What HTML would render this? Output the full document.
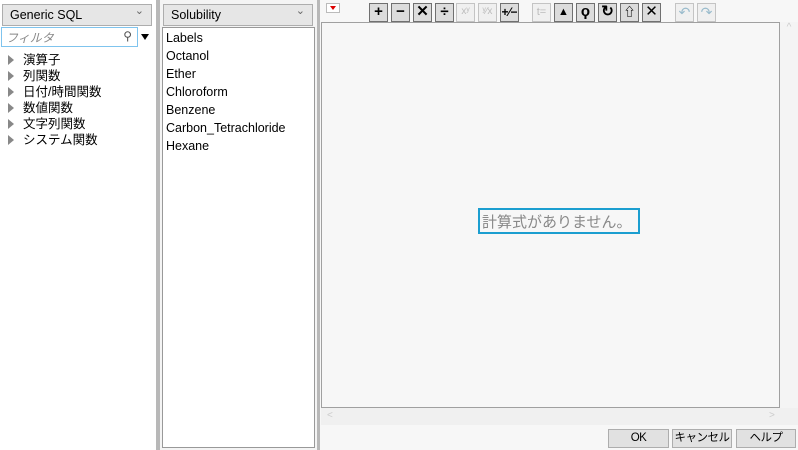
<!DOCTYPE html><html><head><meta charset="utf-8"><style>
html,body{margin:0;width:798px;height:450px;overflow:hidden}
body{background:#f7f7f7;font-family:"Liberation Sans","Noto Sans CJK JP",sans-serif;position:relative;font-size:12px;color:#000}
div{position:absolute;box-sizing:border-box}
.dd{background:#e6e6e6;border:1px solid #adadad;height:22px;padding:3px 7px;font-size:12.5px}
.dd:after{content:"⌄";position:absolute;right:7px;top:-1px;color:#666;font-size:11px}
.tb{top:3px;width:19px;height:19px;border:1px solid #707070;background:#dcdcdc;text-align:center;font-weight:bold;font-size:15px;line-height:16px}
.tb.f{border-color:#c4c4c4;background:#f0f0f0;color:#bbb;font-size:10px;font-weight:normal}
.tr{left:8px;font-size:12.5px;height:16px}
.tr:before{content:"";position:absolute;left:0;top:4px;border-left:6px solid #888;border-top:5px solid transparent;border-bottom:5px solid transparent}
.tr span{position:absolute;left:15px;top:-2px;white-space:nowrap}
.btn{top:429px;height:19px;border:1px solid #adadad;background:#e1e1e1;text-align:center;font-size:11.5px;line-height:17px;white-space:nowrap;overflow:hidden;letter-spacing:-0.5px}
</style></head><body>
<div style="left:0;top:0;width:156px;height:450px;background:#fff"></div>
<div style="left:156px;top:0;width:4px;height:450px;background:#b8b8b8"></div>
<div style="left:160px;top:0;width:157px;height:450px;background:#f4f4f4"></div>
<div style="left:317px;top:0;width:3px;height:450px;background:#b8b8b8"></div>
<div class="dd" style="left:2px;top:4px;width:150px">Generic SQL</div>
<div style="left:1px;top:27px;width:137px;height:20px;border:1px solid #7fc4ee;background:#fff;color:#888;font-style:italic;padding:1px 4px;font-size:12px">フィルタ<span style="position:absolute;right:5px;top:1px;font-style:normal;color:#555">⚲</span></div>
<div style="left:141px;top:34px;border-top:6px solid #000;border-left:4px solid transparent;border-right:4px solid transparent"></div>
<div class="tr" style="top:51px"><span>演算子</span></div>
<div class="tr" style="top:67px"><span>列関数</span></div>
<div class="tr" style="top:83px"><span>日付/時間関数</span></div>
<div class="tr" style="top:99px"><span>数値関数</span></div>
<div class="tr" style="top:115px"><span>文字列関数</span></div>
<div class="tr" style="top:131px"><span>システム関数</span></div>
<div class="dd" style="left:163px;top:4px;width:150px">Solubility</div>
<div style="left:162px;top:27px;width:153px;height:421px;border:1px solid #999;background:#fff;padding:1px 3px;font-size:12.5px;line-height:18px">Labels<br>Octanol<br>Ether<br>Chloroform<br>Benzene<br>Carbon_Tetrachloride<br>Hexane</div>
<div style="left:326px;top:3px;width:14px;height:10px;border:1px solid #bbb;background:#fff"><div style="left:3px;top:2px;border-top:4px solid #d00;border-left:3px solid transparent;border-right:3px solid transparent"></div></div>
<div class="tb" style="left:369px">+</div>
<div class="tb" style="left:391px">−</div>
<div class="tb" style="left:413px">✕</div>
<div class="tb" style="left:435px">÷</div>
<div class="tb f" style="left:456px">xʸ</div>
<div class="tb f" style="left:478px">ʸ⁄x</div>
<div class="tb" style="left:500px;font-size:12px">+⁄−</div>
<div class="tb f" style="left:532px;font-size:11px">t=</div>
<div class="tb" style="left:554px;font-size:11px">▲</div>
<div class="tb" style="left:576px">ϙ</div>
<div class="tb" style="left:598px">↻</div>
<div class="tb" style="left:620px;font-size:12px">⇧</div>
<div class="tb" style="left:642px;font-weight:normal">✕</div>
<div class="tb f" style="left:675px;color:#9bc;font-size:14px">↶</div>
<div class="tb f" style="left:697px;color:#9bc;font-size:14px">↷</div>
<div style="left:321px;top:22px;width:459px;height:386px;border:1px solid #a0a0a0;background:#f7f7f7"></div>
<div style="left:780px;top:22px;width:18px;height:386px;background:#f4f4f4;color:#ccc;font-size:10px;text-align:center">^</div>
<div style="left:321px;top:408px;width:477px;height:17px;background:#f0f0f0;color:#ccc;font-size:10px;padding:2px 6px">&lt;<span style="position:absolute;left:448px">&gt;</span></div>
<div style="left:478px;top:208px;width:162px;height:26px;border:2px solid #1b9ed0;color:#888;font-size:15px;padding:1px 2px;white-space:nowrap">計算式がありません。</div>
<div class="btn" style="left:608px;width:61px">OK</div>
<div class="btn" style="left:672px;width:60px">キャンセル</div>
<div class="btn" style="left:736px;width:60px">ヘルプ</div>
</body></html>
